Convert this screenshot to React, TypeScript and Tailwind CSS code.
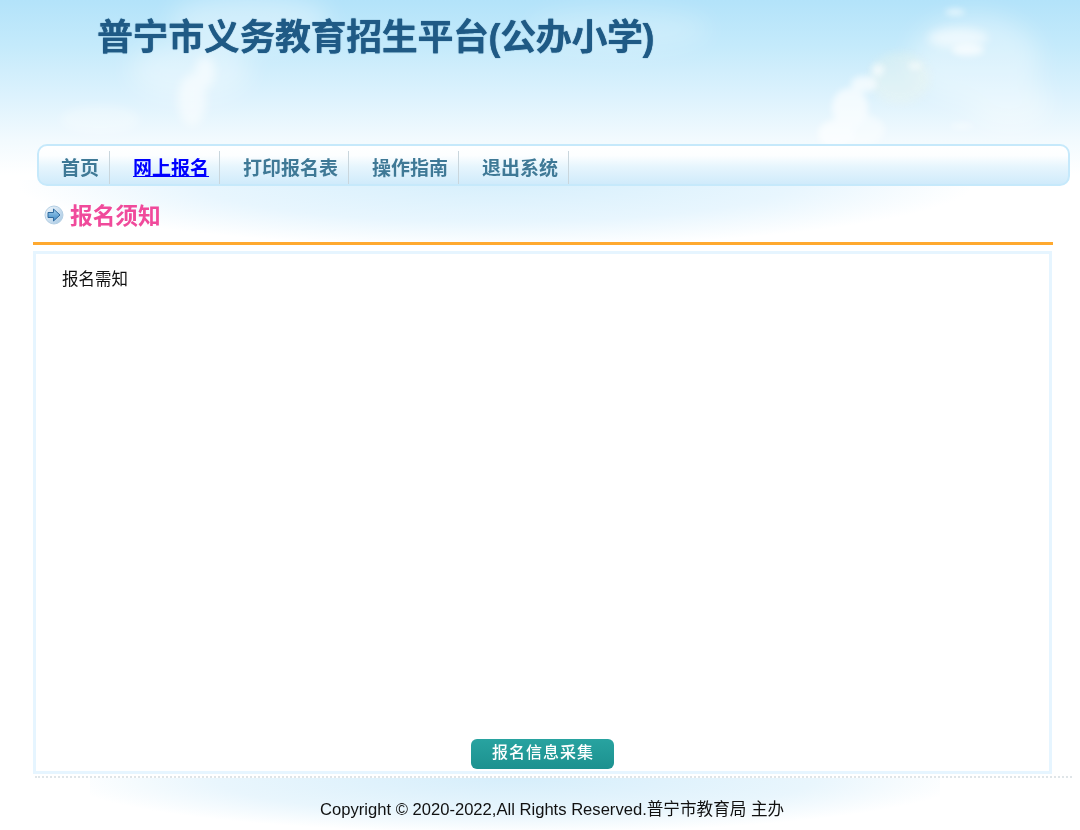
import React from 'react';

const navItems = ['首页', '网上报名', '打印报名表', '操作指南', '退出系统'];

const fontStack = "font-['Liberation_Sans','Noto_Sans_CJK_SC',sans-serif]";

function ArrowIcon(): React.ReactElement {
  return (
    <svg width="20" height="20" viewBox="0 0 20 20" className="mb-[7px] shrink-0">
      <defs>
        <linearGradient id="ring" x1="0" y1="0" x2="1" y2="1">
          <stop offset="0" stopColor="#f2f8fd" />
          <stop offset="1" stopColor="#a4c6e2" />
        </linearGradient>
        <linearGradient id="arrow" x1="0" y1="0" x2="0" y2="1">
          <stop offset="0" stopColor="#a5d2f0" />
          <stop offset="1" stopColor="#3b86c4" />
        </linearGradient>
      </defs>
      <circle cx="10" cy="10" r="9" fill="url(#ring)" stroke="#b3cee3" strokeWidth="1" />
      <path d="M4 7.5h5.5V4L16 10l-6.5 6v-3.5H4z" fill="url(#arrow)" stroke="#2f6a9e" strokeWidth="1" />
    </svg>
  );
}

// soft clouds from the header picture
function Clouds(): React.ReactElement {
  return (
    <svg width="1080" height="150" viewBox="0 0 1080 150" className="absolute left-0 top-0">
      <defs>
        <filter id="soft"><feGaussianBlur stdDeviation="5" /></filter>
        <filter id="softer"><feGaussianBlur stdDeviation="12" /></filter>
        <filter id="crisp"><feGaussianBlur stdDeviation="3" /></filter>
      </defs>
      <g filter="url(#softer)" fill="#ffffff" opacity="0.35">
        <ellipse cx="250" cy="20" rx="80" ry="25" />
        <ellipse cx="190" cy="70" rx="60" ry="30" />
        <ellipse cx="620" cy="30" rx="90" ry="22" opacity="0.6" />
        <ellipse cx="975" cy="60" rx="65" ry="45" />
        <ellipse cx="1010" cy="105" rx="40" ry="25" />
      </g>
      <g filter="url(#soft)" fill="#ffffff" opacity="0.55">
        <ellipse cx="192" cy="100" rx="14" ry="26" />
        <ellipse cx="205" cy="72" rx="10" ry="16" />
        <ellipse cx="958" cy="38" rx="30" ry="10" />
        <ellipse cx="100" cy="120" rx="40" ry="14" opacity="0.5" />
      </g>
      <ellipse cx="900" cy="78" rx="30" ry="26" fill="#f8f8e4" opacity="0.25" filter="url(#soft)" />
      <g filter="url(#crisp)" fill="#ffffff" opacity="0.65">
        <ellipse cx="836" cy="134" rx="18" ry="14" />
        <ellipse cx="850" cy="108" rx="18" ry="20" />
        <ellipse cx="864" cy="84" rx="13" ry="8" />
        <ellipse cx="878" cy="70" rx="6" ry="6" />
        <ellipse cx="915" cy="66" rx="7" ry="3" />
        <ellipse cx="860" cy="130" rx="25" ry="16" opacity="0.7" />
        <ellipse cx="968" cy="50" rx="16" ry="6" />
        <ellipse cx="955" cy="12" rx="10" ry="3" />
        <ellipse cx="962" cy="126" rx="12" ry="3" opacity="0.7" />
      </g>
    </svg>
  );
}

function SkyBackground(): React.ReactElement {
  return (
    <div className="pointer-events-none absolute inset-0 overflow-hidden">
      <div className="absolute inset-x-0 top-0 h-[250px] bg-[linear-gradient(180deg,#b3e3fa_0px,#c4eafb_45px,#dcf2fd_95px,#f2fafe_140px,#ffffff_175px)]" />
      <Clouds />
      {/* band under the nav */}
      <div className="absolute left-[20px] top-[180px] h-[66px] w-[950px] bg-[radial-gradient(ellipse_at_50%_0%,#d6effc_0%,#e8f6fe_45%,#ffffff_72%)]" />
      {/* footer glow */}
      <div className="absolute left-[90px] top-[778px] h-[52px] w-[850px] bg-[radial-gradient(ellipse_at_50%_0%,#d6eefb_0%,#e9f6fd_50%,#ffffff_75%)]" />
    </div>
  );
}

export default function App(): React.ReactElement {
  return (
    <div className={`relative h-[830px] w-full overflow-hidden bg-white ${fontStack}`}>
      <SkyBackground />

      <div className="relative flex flex-col">
        <h1 className="ml-[97px] mt-[15px] h-[129px] text-[36px] font-bold leading-[46px] tracking-[-0.4px] text-[#1f5a85] [text-shadow:0_0_1px_#1f5a85]">
          普宁市义务教育招生平台(公办小学)
        </h1>

        <nav className="ml-[37px] flex h-[42px] w-[1033px] items-center rounded-[10px] border-2 border-[#c6e9fb] bg-[linear-gradient(180deg,#ffffff_0%,#fcfeff_25%,#e6f5fd_55%,#d0ebfb_100%)] pt-[5px]">
          {navItems.map((item) => (
            <div
              key={item}
              className="flex h-[33px] items-center border-r border-[#c9d6dd] pl-[23px] pr-[10px] pt-[3px] first:pl-[22px]"
            >
              {item === '网上报名' ? (
                <a href="#" className="text-[19px] font-bold text-[#0000ff] underline">
                  {item}
                </a>
              ) : (
                <span className="text-[19px] font-bold text-[#3f7996]">{item}</span>
              )}
            </div>
          ))}
        </nav>

        <div className="ml-[44px] mt-[19px] flex h-[26px] items-center gap-[6px]">
          <ArrowIcon />
          <h2 className="-mt-[3px] text-[22.7px] font-bold text-[#f04a9b]">报名须知</h2>
        </div>

        <div className="ml-[33px] mt-[11px] h-[3px] w-[1020px] bg-[#ffa92f]" />

        <div className="ml-[33px] mt-[6px] flex h-[523px] w-[1019px] flex-col border-[3px] border-[#e6f5ff] bg-white">
          <p className="ml-[26px] mt-[13px] text-[16.5px] leading-[24px] text-[#111111]">报名需知</p>
          <div className="mt-auto mb-[2px] flex justify-center pl-[1px] pr-[1px]">
            <button className="h-[30px] w-[143px] rounded-[6px] bg-[linear-gradient(180deg,#28a3a0,#1c918f)] pb-[2px] pl-[1px] font-['Liberation_Serif','Noto_Sans_CJK_SC',serif] text-[16px] font-medium tracking-[1px] text-white">
              报名信息采集
            </button>
          </div>
        </div>

        <div className="ml-[35px] mt-[2px] w-[1037px] border-t-2 border-dotted border-[#dfe5e8]" />

        <p className="ml-[320px] mt-[21px] text-[16.6px] leading-[22px] text-[#111111]">
          Copyright © 2020-2022,All Rights Reserved.普宁市教育局 主办
        </p>
      </div>
    </div>
  );
}
